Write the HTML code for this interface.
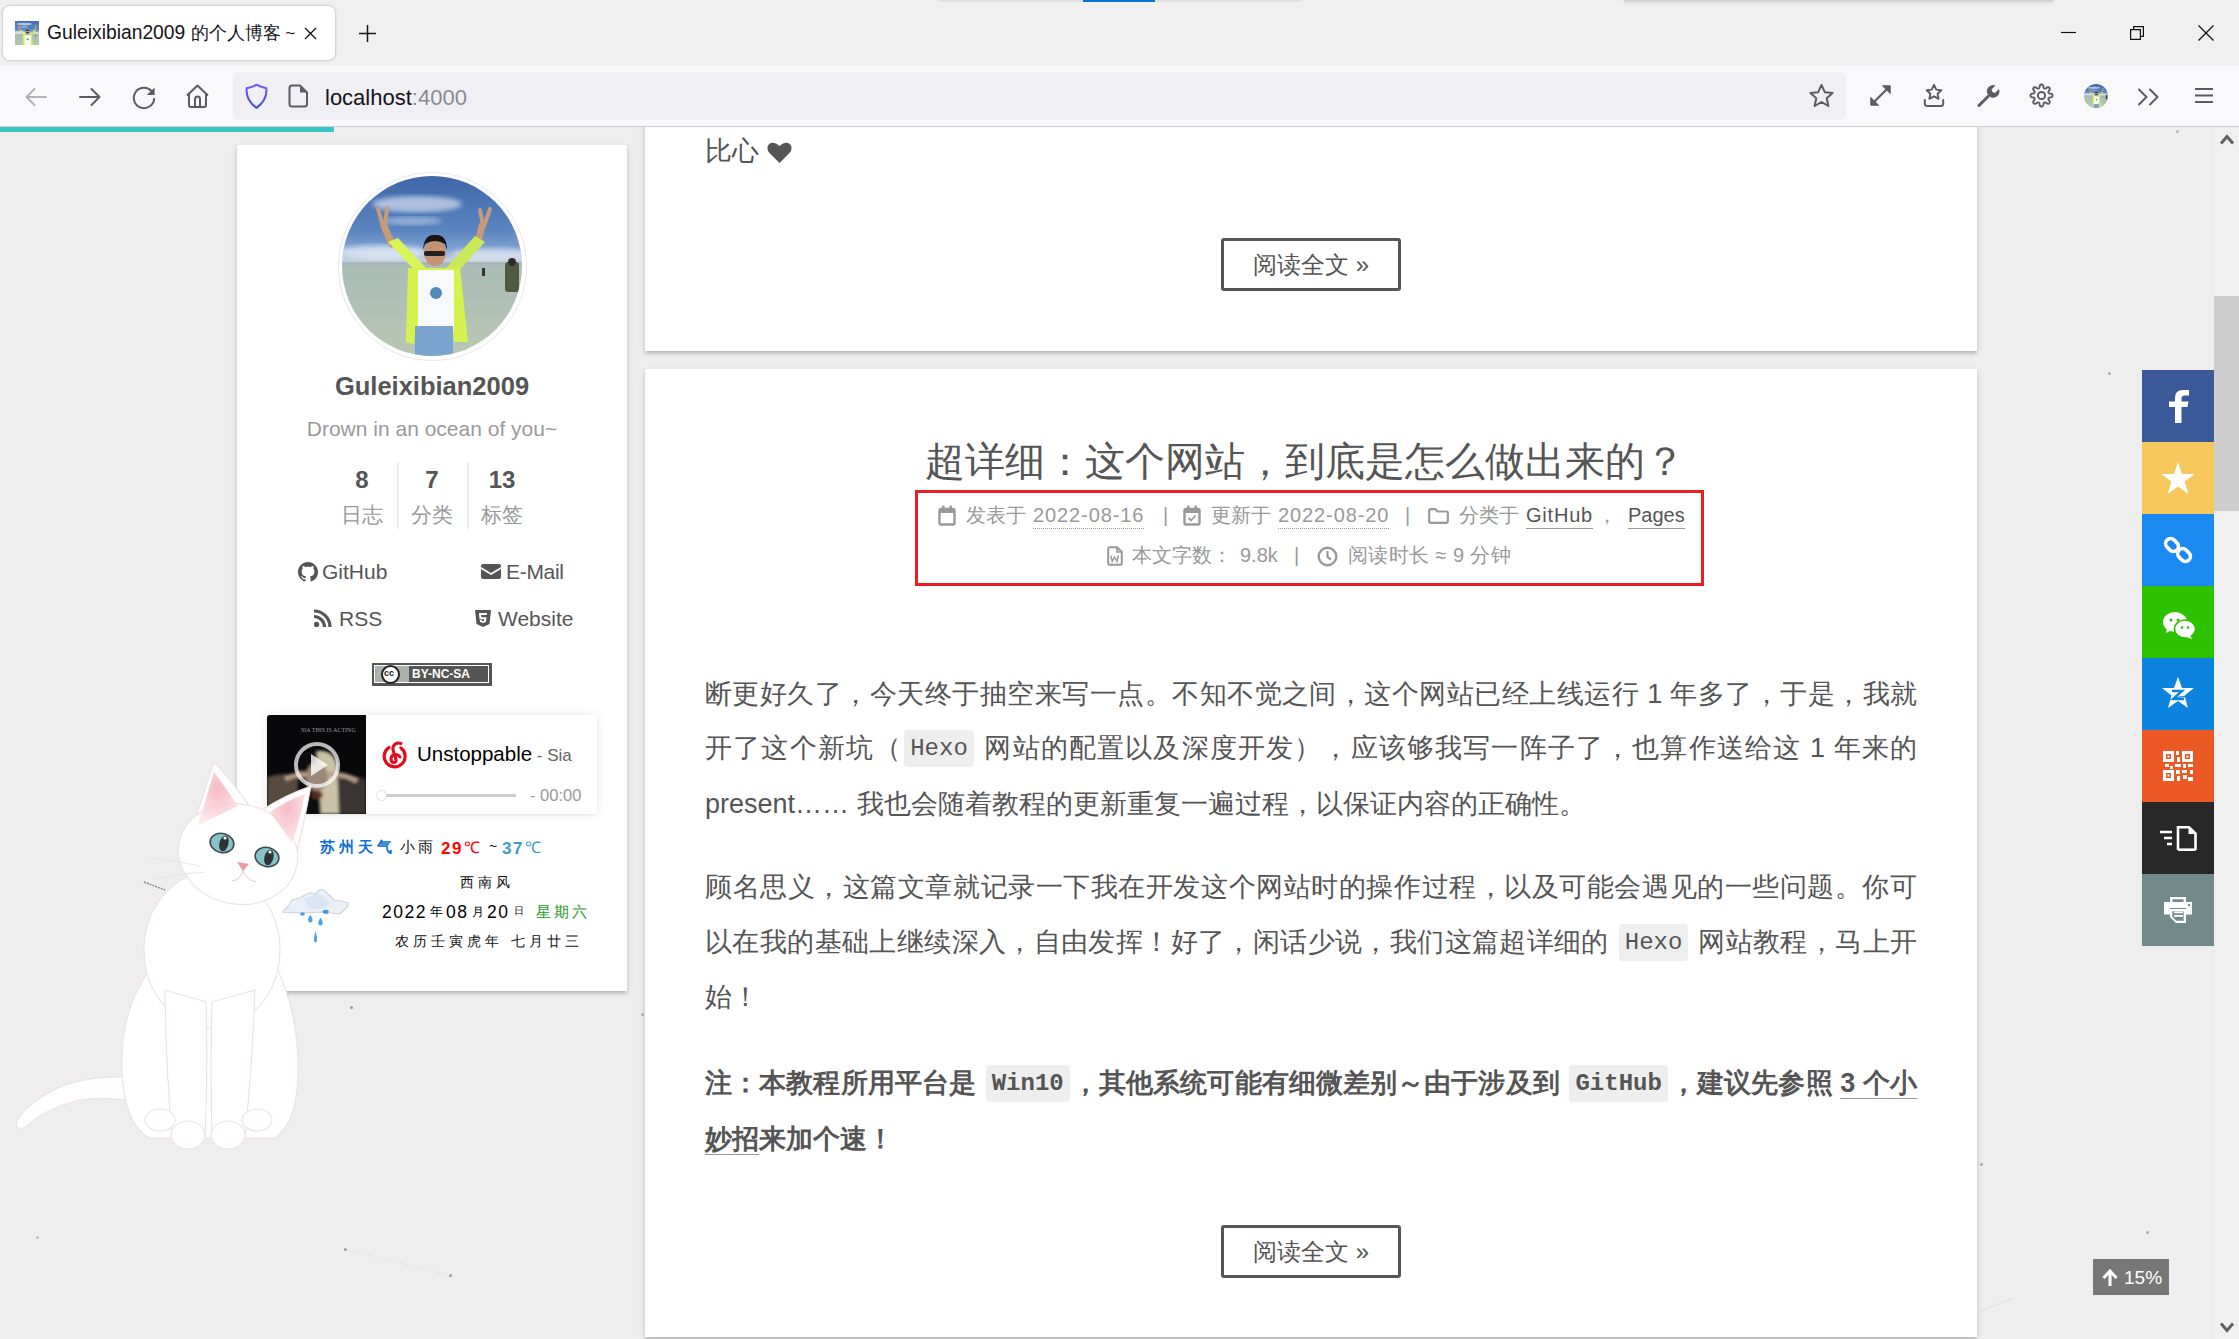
<!DOCTYPE html>
<html><head><meta charset="utf-8">
<style>
*{box-sizing:border-box;margin:0;padding:0}
html,body{width:2239px;height:1339px;overflow:hidden;background:#eee;font-family:"Liberation Sans",sans-serif;}
.abs{position:absolute}
svg{position:absolute;overflow:visible}
#tabstrip{position:absolute;left:0;top:0;width:2239px;height:66px;background:#f0f0f0}
#tab{position:absolute;left:3px;top:6px;width:332px;height:54px;background:#fff;border-radius:7px;box-shadow:0 0 3px rgba(0,0,0,.3)}
#toolbar{position:absolute;left:0;top:66px;width:2239px;height:61px;background:#f9f9fb;border-bottom:1px solid #d0d0d7}
#urlbar{position:absolute;left:233px;top:72px;width:1613px;height:48px;background:#f0f0f4;border-radius:6px}
#viewport{position:absolute;left:0;top:127px;width:2239px;height:1212px;overflow:hidden;background:#eee}
#page{position:absolute;left:0;top:-127px;width:2239px;height:1339px}
#progress{position:absolute;left:0;top:127px;width:334px;height:5px;background:#37c6c0}
#scrolltrack{position:absolute;left:2214px;top:127px;width:25px;height:1212px;background:#f0f0f0}
#thumb{position:absolute;left:2214px;top:296px;width:25px;height:215px;background:#cdcdcd}
.card{position:absolute;background:#fff;box-shadow:0 3px 3px 0 rgba(0,0,0,.12),0 4px 1.5px -3px rgba(0,0,0,.06),0 1.5px 7px 0 rgba(0,0,0,.12)}
#sidebar{left:237px;top:145px;width:390px;height:846px}
#post1{left:645px;top:100px;width:1332px;height:251px}
#post2{left:645px;top:369px;width:1332px;height:968px}
.share{position:absolute;left:2142px;width:72px;height:72px}
.t{position:absolute;white-space:nowrap;line-height:1}

.btn{position:absolute;left:1221px;width:180px;height:53px;border:3px solid #555;border-radius:3px;font-size:24px;color:#555;text-align:center;line-height:47px;white-space:nowrap}
.meta .t{font-size:20px;color:#999;line-height:21px}
.meta .dot{border-bottom:1.5px dotted #999;padding-bottom:2px;letter-spacing:0.9px}
.meta .ul{color:#555;border-bottom:1.5px solid #999;padding-bottom:2px;letter-spacing:0.8px}
.p{position:absolute;left:705px;width:1212px;font-size:27px;line-height:54.6px;height:54.6px;color:#555;white-space:nowrap;overflow:visible}
.p.j{text-align:justify;text-align-last:justify;white-space:normal}
.p.b{font-weight:bold}
.p code{font-family:"Liberation Mono",monospace;font-size:24px;background:#eee;border-radius:4px;padding:5px 6px;margin:0 2px;position:relative;top:-2px}
.lk{border-bottom:1.5px solid #999}
</style></head><body>
<svg width="0" height="0" style="position:absolute"><clipPath id="avclip"><circle cx="90" cy="90" r="90"/></clipPath><symbol id="avraw" viewBox="0 0 180 180">
  <defs>
   <clipPath id="avc"><circle cx="90" cy="90" r="90"/></clipPath>
   <linearGradient id="sky" x1="0" y1="0" x2="0" y2="1"><stop offset="0" stop-color="#3e66a9"/><stop offset="0.3" stop-color="#5a84c0"/><stop offset="0.4" stop-color="#7ea0d0"/><stop offset="0.47" stop-color="#c5d3e3"/><stop offset="0.485" stop-color="#a7b2b8"/><stop offset="0.5" stop-color="#a9bdb6"/><stop offset="1" stop-color="#b9c6b4"/></linearGradient>
   <filter id="bl"><feGaussianBlur stdDeviation="2.5"/></filter>
  </defs>
  <g>
   <rect width="180" height="180" fill="url(#sky)"/>
   <ellipse cx="75" cy="28" rx="45" ry="8" fill="#fff" opacity=".55" filter="url(#bl)"/>
   <ellipse cx="70" cy="45" rx="30" ry="4" fill="#fff" opacity=".4" filter="url(#bl)"/>
   <ellipse cx="40" cy="76" rx="45" ry="7" fill="#fff" opacity=".6" filter="url(#bl)"/>
   <ellipse cx="150" cy="78" rx="40" ry="6" fill="#fff" opacity=".5" filter="url(#bl)"/>
   <path d="M36 33 L41 50 M45 32 L43 50" stroke="#c89a7a" stroke-width="4" stroke-linecap="round"/>
   <path d="M148 33 L142 50 M138 34 L141 50" stroke="#c89a7a" stroke-width="4" stroke-linecap="round"/>
   <path d="M42 50 L50 68" stroke="#c89a7a" stroke-width="7" stroke-linecap="round"/>
   <path d="M140 50 L136 66" stroke="#c89a7a" stroke-width="7" stroke-linecap="round"/>
   <path d="M46 66 L56 62 L84 92 L78 100 Z" fill="#d9f35a"/>
   <path d="M133 60 L143 66 L112 100 L104 92 Z" fill="#c9e85a"/>
   <path d="M66 92 L118 92 L126 166 L112 166 L110 150 L74 150 L72 168 L64 166 Z" fill="#d6f24e"/>
   <rect x="76" y="94" width="36" height="60" fill="#f8f9fa"/>
   <circle cx="94" cy="117" r="6" fill="#4f8ab8"/>
   <rect x="73" y="150" width="38" height="30" fill="#7aa3d0"/>
   <ellipse cx="93" cy="77" rx="11" ry="13" fill="#c69274"/>
   <path d="M81 74 Q82 58 93 59 Q105 58 105 74 L103 68 Q93 62 83 68 Z" fill="#161616"/>
   <rect x="82" y="75" width="21" height="5" rx="2" fill="#222"/>
   <rect x="163" y="86" width="14" height="30" rx="3" fill="#4f5a3c"/>
   <circle cx="170" cy="86" r="4" fill="#2a2a2a"/>
   <rect x="140" y="92" width="3" height="8" fill="#333"/>
  </g>
</symbol></svg>
<!-- ===== BROWSER CHROME ===== -->
<div id="tabstrip"></div>
<div class="abs" style="left:939px;top:0;width:362px;height:2px;background:#e0e0e0"></div>
<div class="abs" style="left:1083px;top:0;width:72px;height:2px;background:#0a6fd8"></div>
<div class="abs" style="left:1624px;top:0;width:429px;height:2px;background:#d3d3d3;box-shadow:0 1px 4px rgba(0,0,0,.12)"></div>
<div id="tab"></div>
<!-- favicon -->
<svg style="left:15px;top:21px;overflow:hidden" width="24" height="24" viewBox="20 10 140 140"><use href="#avraw" width="180" height="180"/></svg>
<div class="t" style="left:47px;top:23px;font-size:19.3px;color:#15141a">Guleixibian2009 <span style="font-size:18.3px">的个人博客</span><span style="font-size:17px"> ~</span></div>
<svg style="left:304px;top:27px" width="13" height="13"><path d="M1 1 L12 12 M12 1 L1 12" stroke="#15141a" stroke-width="1.4"/></svg>
<svg style="left:358px;top:24px" width="19" height="19"><path d="M9.5 1 V18 M1 9.5 H18" stroke="#15141a" stroke-width="1.5"/></svg>
<!-- window controls -->
<svg style="left:2061px;top:31px" width="16" height="3"><path d="M0 1.5 H15" stroke="#111" stroke-width="1.2"/></svg>
<svg style="left:2130px;top:25px" width="16" height="15"><path d="M0.6 4.6 H10.4 V14.4 H0.6 Z M3.6 4.6 V1.6 H13.4 V11.4 H10.4" stroke="#111" stroke-width="1.2" fill="none"/></svg>
<svg style="left:2198px;top:25px" width="16" height="16"><path d="M0.5 0.5 L15.5 15.5 M15.5 0.5 L0.5 15.5" stroke="#111" stroke-width="1.3"/></svg>

<div id="toolbar"></div>
<!-- back / fwd / reload / home -->
<svg style="left:24px;top:87px" width="24" height="20"><path d="M22 10 H3 M10.5 2 L2.5 10 L10.5 18" stroke="#b2b2b8" stroke-width="2" fill="none" stroke-linecap="round" stroke-linejoin="round"/></svg>
<svg style="left:78px;top:87px" width="24" height="20"><path d="M2 10 H21 M13.5 2 L21.5 10 L13.5 18" stroke="#5b5b66" stroke-width="2" fill="none" stroke-linecap="round" stroke-linejoin="round"/></svg>
<svg style="left:132px;top:86px" width="24" height="24"><path d="M22.2 11.9 A10.2 10.2 0 1 1 19.6 5.1" stroke="#5b5b66" stroke-width="2" fill="none"/><path d="M14.8 9 H22.6 V1.4 Z" fill="#5b5b66"/></svg>
<svg style="left:185px;top:84px" width="25" height="25"><path d="M2 11.5 L12.5 1.5 L23 11.5 M4 9.5 V21 Q4 23 6 23 H19 Q21 23 21 21 V9.5 M10 23 V15.5 Q10 12.5 12.5 12.5 Q15 12.5 15 15.5 V23" stroke="#5b5b66" stroke-width="2" fill="none" stroke-linejoin="round"/></svg>

<div id="urlbar"></div>
<svg style="left:244px;top:83px" width="25" height="27"><defs><linearGradient id="sg" x1="0" y1="0" x2="0" y2="1"><stop offset="0" stop-color="#7a5cf5"/><stop offset="1" stop-color="#3a4fd8"/></linearGradient></defs><path d="M12.5 1.8 Q17 4 22.3 5.2 Q23.5 17 12.5 24.8 Q1.5 17 2.7 5.2 Q8 4 12.5 1.8 Z" stroke="url(#sg)" stroke-width="2.1" fill="none" stroke-linejoin="round"/></svg>
<svg style="left:288px;top:84px" width="21" height="24"><path d="M3 1.5 H12 L19 8.5 V20 Q19 22.5 16.5 22.5 H4 Q1.5 22.5 1.5 20 V4 Q1.5 1.5 4 1.5 Z" stroke="#5b5b66" stroke-width="2" fill="none"/><path d="M12 1.5 V8.5 H19 Z" fill="#5b5b66"/></svg>
<div class="t" style="left:325px;top:87px;font-size:22px;color:#15141a">localhost<span style="color:#8a8a92">:4000</span></div>
<svg style="left:1808px;top:83px" width="27" height="26"><path d="M13.5 2 L16.8 9.2 L24.6 10 L18.7 15.2 L20.4 23 L13.5 19 L6.6 23 L8.3 15.2 L2.4 10 L10.2 9.2 Z" stroke="#5b5b66" stroke-width="2" fill="none" stroke-linejoin="round"/></svg>
<!-- right toolbar icons -->
<svg style="left:1869px;top:84px" width="23" height="23"><path d="M4.5 18.5 L18.5 4.5" stroke="#5b5b66" stroke-width="2.2"/><path d="M13.5 1.8 H21.2 V9.5 Z M1.8 13.5 V21.2 H9.5 Z" fill="#5b5b66" stroke="#5b5b66" stroke-width="1" stroke-linejoin="round"/></svg>
<svg style="left:1922px;top:83px" width="24" height="25"><path d="M12 1.8 L14.3 6.6 L19.3 7.2 L15.6 10.7 L16.6 15.8 L12 13.3 L7.4 15.8 L8.4 10.7 L4.7 7.2 L9.7 6.6 Z" stroke="#5b5b66" stroke-width="1.9" fill="none" stroke-linejoin="round"/><path d="M2.8 17 V20.5 Q2.8 23 5.3 23 H18.7 Q21.2 23 21.2 20.5 V17" stroke="#5b5b66" stroke-width="2" fill="none" stroke-linecap="round"/></svg>
<svg style="left:1976px;top:84px" width="24" height="24"><path d="M3 21.5 L13 11.5" stroke="#5b5b66" stroke-width="3" stroke-linecap="round"/><path d="M11 9 A6.5 6.5 0 0 1 19.5 1.5 L15.5 5.5 L16.5 8 L19 9 L23 5 A6.5 6.5 0 0 1 15 13.5 Z" fill="#5b5b66"/></svg>
<svg style="left:2029px;top:83px" width="25" height="25"><path d="M12.50 1.50 L12.79 1.51 L13.07 1.56 L13.35 1.65 L13.62 1.80 L13.87 2.07 L14.09 2.48 L14.25 3.06 L14.37 3.70 L14.47 4.28 L14.59 4.70 L14.73 4.98 L14.88 5.16 L15.05 5.29 L15.23 5.40 L15.41 5.48 L15.60 5.55 L15.79 5.60 L16.00 5.63 L16.24 5.61 L16.54 5.51 L16.92 5.29 L17.40 4.96 L17.94 4.58 L18.46 4.29 L18.91 4.15 L19.27 4.14 L19.57 4.22 L19.83 4.36 L20.06 4.53 L20.28 4.72 L20.47 4.94 L20.64 5.17 L20.78 5.43 L20.86 5.73 L20.85 6.09 L20.71 6.54 L20.42 7.06 L20.04 7.60 L19.71 8.08 L19.49 8.46 L19.39 8.76 L19.37 9.00 L19.40 9.21 L19.45 9.40 L19.52 9.59 L19.60 9.77 L19.71 9.95 L19.84 10.12 L20.02 10.27 L20.30 10.41 L20.72 10.53 L21.30 10.63 L21.94 10.75 L22.52 10.91 L22.93 11.13 L23.20 11.38 L23.35 11.65 L23.44 11.93 L23.49 12.21 L23.50 12.50 L23.49 12.79 L23.44 13.07 L23.35 13.35 L23.20 13.62 L22.93 13.87 L22.52 14.09 L21.94 14.25 L21.30 14.37 L20.72 14.47 L20.30 14.59 L20.02 14.73 L19.84 14.88 L19.71 15.05 L19.60 15.23 L19.52 15.41 L19.45 15.60 L19.40 15.79 L19.37 16.00 L19.39 16.24 L19.49 16.54 L19.71 16.92 L20.04 17.40 L20.42 17.94 L20.71 18.46 L20.85 18.91 L20.86 19.27 L20.78 19.57 L20.64 19.83 L20.47 20.06 L20.28 20.28 L20.06 20.47 L19.83 20.64 L19.57 20.78 L19.27 20.86 L18.91 20.85 L18.46 20.71 L17.94 20.42 L17.40 20.04 L16.92 19.71 L16.54 19.49 L16.24 19.39 L16.00 19.37 L15.79 19.40 L15.60 19.45 L15.41 19.52 L15.23 19.60 L15.05 19.71 L14.88 19.84 L14.73 20.02 L14.59 20.30 L14.47 20.72 L14.37 21.30 L14.25 21.94 L14.09 22.52 L13.87 22.93 L13.62 23.20 L13.35 23.35 L13.07 23.44 L12.79 23.49 L12.50 23.50 L12.21 23.49 L11.93 23.44 L11.65 23.35 L11.38 23.20 L11.13 22.93 L10.91 22.52 L10.75 21.94 L10.63 21.30 L10.53 20.72 L10.41 20.30 L10.27 20.02 L10.12 19.84 L9.95 19.71 L9.77 19.60 L9.59 19.52 L9.40 19.45 L9.21 19.40 L9.00 19.37 L8.76 19.39 L8.46 19.49 L8.08 19.71 L7.60 20.04 L7.06 20.42 L6.54 20.71 L6.09 20.85 L5.73 20.86 L5.43 20.78 L5.17 20.64 L4.94 20.47 L4.72 20.28 L4.53 20.06 L4.36 19.83 L4.22 19.57 L4.14 19.27 L4.15 18.91 L4.29 18.46 L4.58 17.94 L4.96 17.40 L5.29 16.92 L5.51 16.54 L5.61 16.24 L5.63 16.00 L5.60 15.79 L5.55 15.60 L5.48 15.41 L5.40 15.23 L5.29 15.05 L5.16 14.88 L4.98 14.73 L4.70 14.59 L4.28 14.47 L3.70 14.37 L3.06 14.25 L2.48 14.09 L2.07 13.87 L1.80 13.62 L1.65 13.35 L1.56 13.07 L1.51 12.79 L1.50 12.50 L1.51 12.21 L1.56 11.93 L1.65 11.65 L1.80 11.38 L2.07 11.13 L2.48 10.91 L3.06 10.75 L3.70 10.63 L4.28 10.53 L4.70 10.41 L4.98 10.27 L5.16 10.12 L5.29 9.95 L5.40 9.77 L5.48 9.59 L5.55 9.40 L5.60 9.21 L5.63 9.00 L5.61 8.76 L5.51 8.46 L5.29 8.08 L4.96 7.60 L4.58 7.06 L4.29 6.54 L4.15 6.09 L4.14 5.73 L4.22 5.43 L4.36 5.17 L4.53 4.94 L4.72 4.72 L4.94 4.53 L5.17 4.36 L5.43 4.22 L5.73 4.14 L6.09 4.15 L6.54 4.29 L7.06 4.58 L7.60 4.96 L8.08 5.29 L8.46 5.51 L8.76 5.61 L9.00 5.63 L9.21 5.60 L9.40 5.55 L9.59 5.48 L9.77 5.40 L9.95 5.29 L10.12 5.16 L10.27 4.98 L10.41 4.70 L10.53 4.28 L10.63 3.70 L10.75 3.06 L10.91 2.48 L11.13 2.07 L11.38 1.80 L11.65 1.65 L11.93 1.56 L12.21 1.51 Z" stroke="#5b5b66" stroke-width="1.9" fill="none" stroke-linejoin="round"/><circle cx="12.5" cy="12.5" r="3.6" stroke="#5b5b66" stroke-width="2" fill="none"/></svg>
<svg style="left:2084px;top:84px;overflow:hidden" width="24" height="24" viewBox="0 0 180 180"><g clip-path="url(#avclip)"><use href="#avraw" width="180" height="180"/></g></svg>
<svg style="left:2137px;top:88px" width="25" height="18"><path d="M2 1.5 L9.5 9 L2 16.5 M13 1.5 L20.5 9 L13 16.5" stroke="#5b5b66" stroke-width="2" fill="none" stroke-linejoin="round" stroke-linecap="round"/></svg>
<svg style="left:2194px;top:87px" width="20" height="17"><path d="M1 2 H19 M1 8.5 H19 M1 15 H19" stroke="#5b5b66" stroke-width="2"/></svg>

<!-- ===== PAGE ===== -->
<div id="viewport"><div id="page">
<div id="scrolltrack"></div>
<div id="thumb"></div>
<div class="card" id="sidebar"></div>

<!-- sidebar content -->
<div class="abs" style="left:338px;top:172px;width:189px;height:189px;border-radius:50%;border:1.5px solid #e8e8e8;padding:3px;background:#fff">
 <svg style="left:3px;top:3px;overflow:hidden" width="180" height="180" viewBox="0 0 180 180"><g clip-path="url(#avclip)"><use href="#avraw" width="180" height="180"/></g> </svg>
</div>
<div class="t" style="left:237px;width:390px;text-align:center;top:374px;font-size:25.5px;font-weight:bold;color:#555">Guleixibian2009</div>
<div class="t" style="left:237px;width:390px;text-align:center;top:418px;font-size:21px;color:#999">Drown in an ocean of you~</div>
<div class="t" style="left:332px;width:60px;text-align:center;top:468px;font-size:24px;font-weight:bold;color:#555">8</div>
<div class="t" style="left:402px;width:60px;text-align:center;top:468px;font-size:24px;font-weight:bold;color:#555">7</div>
<div class="t" style="left:472px;width:60px;text-align:center;top:468px;font-size:24px;font-weight:bold;color:#555">13</div>
<div class="t" style="left:332px;width:60px;text-align:center;top:504px;font-size:21px;color:#999">日志</div>
<div class="t" style="left:402px;width:60px;text-align:center;top:504px;font-size:21px;color:#999">分类</div>
<div class="t" style="left:472px;width:60px;text-align:center;top:504px;font-size:21px;color:#999">标签</div>
<div class="abs" style="left:397px;top:462px;width:1.5px;height:67px;background:#eee"></div>
<div class="abs" style="left:467px;top:462px;width:1.5px;height:67px;background:#eee"></div>
<!-- links -->
<svg style="left:298px;top:562px" width="20" height="20" viewBox="0 0 16 16"><path fill="#555" d="M8 0C3.58 0 0 3.58 0 8c0 3.54 2.29 6.53 5.47 7.59.4.07.55-.17.55-.38 0-.19-.01-.82-.01-1.49-2.01.37-2.53-.49-2.69-.94-.09-.23-.48-.94-.82-1.13-.28-.15-.68-.52-.01-.53.63-.01 1.08.58 1.23.82.72 1.21 1.87.87 2.33.66.07-.52.28-.87.51-1.07-1.78-.2-3.64-.89-3.640-3.95 0-.87.31-1.59.82-2.15-.08-.2-.36-1.02.08-2.12 0 0 .67-.21 2.2.82.64-.18 1.32-.27 2-.27.68 0 1.36.09 2 .27 1.53-1.04 2.2-.82 2.2-.82.44 1.1.16 1.92.08 2.12.51.56.82 1.270.82 2.15 0 3.07-1.87 3.75-3.65 3.95.29.25.54.73.54 1.48 0 1.07-.01 1.93-.01 2.2 0 .21.15.46.55.38A8.013 8.013 0 0016 8c0-4.42-3.58-8-8-8z"/></svg>
<div class="t" style="left:322px;top:561px;font-size:21px;color:#555">GitHub</div>
<svg style="left:481px;top:564px" width="20" height="15"><path d="M2 0 H18 Q20 0 20 2 V3 L10 9 L0 3 V2 Q0 0 2 0 Z M0 5 L10 11 L20 5 V13 Q20 15 18 15 H2 Q0 15 0 13 Z" fill="#555"/></svg>
<div class="t" style="left:506px;top:561px;font-size:21px;color:#555;letter-spacing:-0.3px">E-Mail</div>
<svg style="left:314px;top:610px" width="18" height="17"><circle cx="2.6" cy="14.4" r="2.6" fill="#555"/><path d="M0 6.5 A10.5 10.5 0 0 1 10.5 17 M0 1 A16 16 0 0 1 16 17" stroke="#555" stroke-width="3.2" fill="none"/></svg>
<div class="t" style="left:339px;top:608px;font-size:21px;color:#555">RSS</div>
<svg style="left:475px;top:610px" width="16" height="17"><path d="M0 0 H16 L14.5 14 L8 17 L1.5 14 Z" fill="#555"/><path d="M4 3 H12 L11.7 5 H6.2 L6.4 7.3 H11.5 L11 12 L8 13 L5 12 L4.8 10 H6.8 L7 11 L8 11.3 L9 11 L9.2 9.2 H4.5 Z" fill="#fff"/></svg>
<div class="t" style="left:498px;top:608px;font-size:21px;color:#555">Website</div>
<!-- cc badge -->
<div class="abs" style="left:372px;top:663px;width:120px;height:23px;background:#555;border:1.5px solid #555">
 <div class="abs" style="left:1px;top:1px;width:115px;height:18px;background:#aab2ab;border:0"></div>
 <div class="abs" style="left:36px;top:1px;width:80px;height:18px;background:#555"></div>
 <div class="abs" style="left:1px;top:1px;width:115px;height:18px;border:1px solid #fff"></div>
 <div class="abs" style="left:8px;top:1px;width:19px;height:19px;border-radius:50%;background:#fff;border:2px solid #222"></div>
 <div class="t" style="left:11px;top:5px;font-size:9px;font-weight:bold;color:#222">cc</div>
 <div class="t" style="left:39px;top:4px;font-size:12px;font-weight:bold;color:#fff">BY-NC-SA</div>
</div>
<!-- player -->
<div class="abs" style="left:267px;top:715px;width:330px;height:99px;background:#fff;border-radius:3px;box-shadow:0 0 12px rgba(0,0,0,.09),0 1px 2px rgba(0,0,0,.05)">
 <div class="abs" style="left:0;top:0;width:99px;height:99px;background:#08080a;border-radius:3px 0 0 3px;overflow:hidden">
  <svg style="left:0;top:0" width="99" height="99" viewBox="0 0 99 99">
   <defs><filter id="cb"><feGaussianBlur stdDeviation="1.5"/></filter></defs>
   <g filter="url(#cb)">
   <path d="M0 62 Q20 56 35 62 L40 99 H0 Z" fill="#6a5a4c" opacity=".8"/>
   <path d="M60 62 Q80 58 99 64 V99 H60 Z" fill="#3a3632"/>
   <path d="M30 44 Q46 30 62 40 L70 99 H30 Z" fill="#101010"/>
   <path d="M50 36 Q66 34 70 50 L72 99 H54 Z" fill="#c9c2a4"/>
   <ellipse cx="50" cy="62" rx="11" ry="14" fill="#9c8878"/>
   <path d="M18 64 Q32 58 40 60 M62 60 Q76 58 90 66" stroke="#b89c84" stroke-width="5" fill="none"/>
   <ellipse cx="50" cy="80" rx="6" ry="4" fill="#5a2a24"/>
   </g>
   <text x="34" y="17" font-size="6" fill="#9a9a9a" font-family="Liberation Serif">SIA THIS IS ACTING</text>
  </svg>
 </div>
 <div class="abs" style="left:27px;top:27px;width:46px;height:46px;border-radius:50%;border:4px solid rgba(255,255,255,.72)"></div>
 <svg style="left:42px;top:38px" width="20" height="24"><path d="M2 1 L19 12 L2 23 Z" fill="rgba(255,255,255,.8)"/></svg>
 <svg style="left:114px;top:26px" width="27" height="28" viewBox="0 0 27 28"><path d="M8 6.5 A10.5 10.5 0 1 0 20 7" stroke="#e60a1e" stroke-width="3.2" fill="none" stroke-linecap="round"/><path d="M20 2.5 Q15 1 12.5 5 Q11 8 13 12 L15 18.5 Q15.8 21.5 13 21.5 Q10 21.5 10 18 Q10 14.5 13.5 13.5 Q17 13 19 16" stroke="#e60a1e" stroke-width="3" fill="none" stroke-linecap="round"/></svg>
 <div class="t" style="left:150px;top:29px;font-size:20.5px;color:#000">Unstoppable<span style="font-size:17px;color:#666"> - Sia</span></div>
 <div class="abs" style="left:112px;top:79px;width:137px;height:3px;background:#cdcdcd"></div>
 <div class="abs" style="left:109px;top:75px;width:11px;height:11px;border-radius:50%;background:#fff;border:1.5px solid #ddd"></div>
 <div class="t" style="left:263px;top:72px;font-size:16.5px;color:#999">- 00:00</div>
</div>
<!-- weather -->
<div class="t" style="left:320px;top:839px;font-size:15px;font-weight:bold;color:#0b6fd1;letter-spacing:4px">苏州天气</div>
<div class="t" style="left:400px;top:839px;font-size:15px;color:#111;letter-spacing:3px">小雨</div>
<div class="t" style="left:441px;top:840px;font-size:17px;font-weight:bold;color:#f00;letter-spacing:1.5px">29</div>
<div class="t" style="left:464px;top:840px;font-size:16px;color:#f00">℃</div>
<div class="t" style="left:489px;top:839px;font-size:14px;color:#111">~</div>
<div class="t" style="left:502px;top:840px;font-size:17px;font-weight:bold;color:#3d9ccc;letter-spacing:1.5px">37</div>
<div class="t" style="left:525px;top:840px;font-size:16px;color:#3d9ccc">℃</div>
<div class="t" style="left:460px;top:875px;font-size:14px;color:#111;letter-spacing:4px">西南风</div>
<div class="t" style="left:382px;top:904px;font-size:17.5px;color:#000;letter-spacing:1.5px">2022</div>
<div class="t" style="left:430px;top:906px;font-size:12.5px;color:#000">年</div>
<div class="t" style="left:446px;top:904px;font-size:17.5px;color:#000;letter-spacing:1.5px">08</div>
<div class="t" style="left:472px;top:906px;font-size:12px;color:#000">月</div>
<div class="t" style="left:487px;top:904px;font-size:17.5px;color:#000;letter-spacing:1.5px">20</div>
<div class="t" style="left:514px;top:906px;font-size:10px;color:#000">日</div>
<div class="t" style="left:536px;top:904px;font-size:15px;color:#1a9a1a;letter-spacing:3px">星期六</div>
<div class="t" style="left:395px;top:935px;font-size:13.5px;color:#111;letter-spacing:4px">农历壬寅虎年 七月廿三</div>
<svg style="left:282px;top:887px" width="68" height="58"><defs><linearGradient id="cg" x1="0" y1="0" x2="1" y2="1"><stop offset="0" stop-color="#f4f7fb"/><stop offset="0.5" stop-color="#e6eef8"/><stop offset="1" stop-color="#eef2f6"/></linearGradient></defs><path d="M1 24 L6 20 L10 13 L18 11 L22 8.5 L28 6 L33 7 L38 2.5 L42 3 L52 13 L60 14 L66 16 L66 19 L58 27 L40 25 L20 26 L1 25.5 Z" fill="url(#cg)" stroke="#cfd2d6" stroke-width="1.1" stroke-linejoin="round"/><path d="M22 12 L36 6 L48 16 L40 22 L28 22 Z" fill="#d4e2f5" opacity=".8"/><ellipse cx="20.5" cy="27" rx="2.4" ry="1.8" fill="#4a9fe0"/><path d="M28.3 27.5 Q31 32 30.5 34 Q28.3 37 26.1 34 Q25.6 32 28.3 27.5 Z" fill="#4aa6e6"/><path d="M38.5 30.5 Q41.2 35 40.7 37 Q38.5 40 36.3 37 Q35.8 35 38.5 30.5 Z" fill="#4aa6e6"/><ellipse cx="43.7" cy="24.8" rx="3" ry="2" fill="#3f95e0"/><path d="M33.5 44 Q35.5 50 35 54 Q33.5 57 32 54 Q31.5 50 33.5 44 Z" fill="#4aa6ee"/></svg>

<div class="card" id="post1"></div>

<!-- cat -->
<svg style="left:0;top:740px" width="360" height="420" viewBox="0 0 360 420">
 <defs>
  <radialGradient id="earg" cx="0.5" cy="0.3" r="0.7"><stop offset="0" stop-color="#f4aab6"/><stop offset="1" stop-color="#fbe3e7"/></radialGradient>
  <radialGradient id="eyeg" cx="0.5" cy="0.5" r="0.5"><stop offset="0" stop-color="#1e2a2c"/><stop offset="0.45" stop-color="#2f4a50"/><stop offset="0.55" stop-color="#4f9aa6"/><stop offset="1" stop-color="#7cc0c8"/></radialGradient>
  <filter id="soft"><feGaussianBlur stdDeviation="1.2"/></filter>
 </defs>
 <g stroke="#f0e2e4" stroke-width="1.2" fill="#fff">
  <!-- tail -->
  <path d="M135 338 Q100 334 65 345 Q30 360 17 380 Q14 392 26 387 Q45 368 80 360 Q115 355 150 366 Z"/>
  <!-- haunches / lower body -->
  <path d="M150 230 Q120 270 122 330 Q124 385 150 398 L275 398 Q300 380 298 320 Q296 260 270 215 Z"/>
  <!-- chest -->
  <ellipse cx="212" cy="210" rx="68" ry="78"/>
  <!-- front legs -->
  <path d="M165 250 Q166 330 172 395 L205 397 Q208 330 206 262 Z"/>
  <path d="M212 262 Q210 330 212 397 L245 395 Q252 330 255 250 Z"/>
  <!-- paws -->
  <ellipse cx="160" cy="380" rx="15" ry="11"/>
  <ellipse cx="257" cy="380" rx="15" ry="11"/>
  <ellipse cx="188" cy="395" rx="17" ry="14"/>
  <ellipse cx="228" cy="395" rx="17" ry="14"/>
  <!-- ears -->
  <path d="M190 95 L214 22 Q232 40 252 70 Z"/>
  <path d="M262 70 Q285 55 311 46 Q305 80 296 115 Z"/>
  <!-- head -->
  <ellipse cx="238" cy="114" rx="60" ry="50" transform="rotate(12 238 114)"/>
 </g>
 <path d="M198 85 L214 32 Q226 48 238 66 Z" fill="url(#earg)" opacity=".8"/>
 <path d="M270 72 Q288 60 305 54 Q300 80 292 103 Z" fill="url(#earg)" opacity=".8"/>
 <g transform="rotate(14 222 103)"><ellipse cx="222" cy="103" rx="12" ry="9.5" fill="#86c4cc" stroke="#3e4a4c" stroke-width="1.6"/><ellipse cx="224" cy="103" rx="4.5" ry="8" fill="#2e3436"/></g>
 <g transform="rotate(14 267 117)"><ellipse cx="267" cy="117" rx="12" ry="9.5" fill="#86c4cc" stroke="#3e4a4c" stroke-width="1.6"/><ellipse cx="269" cy="117" rx="4.5" ry="8" fill="#2e3436"/></g>
 <circle cx="225" cy="98" r="1.6" fill="#fff"/><circle cx="270" cy="112" r="1.6" fill="#fff"/>
 <path d="M237 122 L249 124 L243 131 Z" fill="#e79aa4"/>
 <path d="M243 131 Q240 140 232 141 M243 131 Q247 140 256 142" stroke="#e6c8cc" stroke-width="1" fill="none"/>
 <path d="M144 142 L165 150" stroke="#8a8a8a" stroke-width="1.5" stroke-dasharray="2 1"/>
 <path d="M200 126 Q170 120 150 118 M205 132 Q175 134 155 140" stroke="#eadde0" stroke-width="0.8" fill="none"/>
</svg>

<div class="card" id="post2"></div>

<!-- post1 content -->
<div class="t" style="left:705px;top:138px;font-size:27px;color:#555">比心 <svg style="position:relative;left:0;top:3px;display:inline-block" width="25" height="21" viewBox="0 0 25 21"><path d="M12.5 21 L2.5 11 Q-1.5 6 2 2.2 Q6.5 -1.5 12.5 4 Q18.5 -1.5 23 2.2 Q26.5 6 22.5 11 Z" fill="#555"/></svg></div>
<div class="btn" style="top:238px">阅读全文 »</div>
<!-- post2 content -->
<div class="t" style="left:639px;width:1332px;text-align:center;top:441px;font-size:40px;color:#555">超详细：这个网站，到底是怎么做出来的？</div>
<div class="abs" style="left:915px;top:490px;width:789px;height:96px;border:3px solid #ec1c24"></div>
<div class="meta" style="top:505px">
 <svg style="left:938px;top:505px" width="18" height="21"><rect x="1.5" y="4" width="15" height="15.5" rx="1.5" stroke="#999" stroke-width="2.4" fill="none"/><rect x="1.5" y="4" width="15" height="4" fill="#999"/><rect x="4" y="0.5" width="2.6" height="5" rx="1" fill="#999"/><rect x="11.4" y="0.5" width="2.6" height="5" rx="1" fill="#999"/></svg>
 <div class="t" style="left:966px;top:505px">发表于</div>
 <div class="t dot" style="left:1033px;top:505px">2022-08-16</div>
 <div class="t" style="left:1163px;top:505px">|</div>
 <svg style="left:1183px;top:505px" width="18" height="21"><rect x="1.5" y="4" width="15" height="15.5" rx="1.5" stroke="#999" stroke-width="2.4" fill="none"/><rect x="1.5" y="4" width="15" height="4" fill="#999"/><rect x="4" y="0.5" width="2.6" height="5" rx="1" fill="#999"/><rect x="11.4" y="0.5" width="2.6" height="5" rx="1" fill="#999"/><path d="M5.5 13 L8 15.5 L12.5 10.5" stroke="#999" stroke-width="1.8" fill="none"/></svg>
 <div class="t" style="left:1211px;top:505px">更新于</div>
 <div class="t dot" style="left:1278px;top:505px">2022-08-20</div>
 <div class="t" style="left:1405px;top:505px">|</div>
 <svg style="left:1428px;top:508px" width="21" height="16"><path d="M1.2 2.5 Q1.2 1.2 2.5 1.2 H7.5 L9.5 3.5 H18.5 Q19.8 3.5 19.8 4.8 V13.5 Q19.8 14.8 18.5 14.8 H2.5 Q1.2 14.8 1.2 13.5 Z" stroke="#999" stroke-width="2.2" fill="none" stroke-linejoin="round"/></svg>
 <div class="t" style="left:1459px;top:505px">分类于</div>
 <div class="t ul" style="left:1526px;top:505px">GitHub</div>
 <div class="t" style="left:1597px;top:505px">，</div>
 <div class="t ul" style="left:1628px;top:505px;letter-spacing:0">Pages</div>
</div>
<div class="meta">
 <svg style="left:1107px;top:546px" width="16" height="20"><path d="M1.2 2.5 Q1.2 1.2 2.5 1.2 H10 L14.8 6 V17.5 Q14.8 18.8 13.5 18.8 H2.5 Q1.2 18.8 1.2 17.5 Z" stroke="#999" stroke-width="2" fill="none"/><path d="M10 1.2 V6 H14.8" stroke="#999" stroke-width="1.6" fill="none"/><path d="M3.8 9.5 L5.2 15.5 L7.6 11 L10 15.5 L11.4 9.5" stroke="#999" stroke-width="1.4" fill="none"/></svg>
 <div class="t" style="left:1132px;top:545px">本文字数：</div>
 <div class="t" style="left:1240px;top:545px">9.8k</div>
 <div class="t" style="left:1294px;top:545px">|</div>
 <svg style="left:1317px;top:546px" width="21" height="21"><circle cx="10.5" cy="10.5" r="8.8" stroke="#999" stroke-width="2.4" fill="none"/><path d="M10.5 5 V11 L14 13.5" stroke="#999" stroke-width="2.2" fill="none"/></svg>
 <div class="t" style="left:1348px;top:545px;letter-spacing:0.4px">阅读时长 ≈ 9 分钟</div>
</div>
<!-- paragraphs -->
<div class="p j" style="top:667px">断更好久了，今天终于抽空来写一点。不知不觉之间，这个网站已经上线运行 1 年多了，于是，我就</div>
<div class="p j" style="top:721px">开了这个新坑（<code>Hexo</code> 网站的配置以及深度开发），应该够我写一阵子了，也算作送给这 1 年来的</div>
<div class="p" style="top:777px">present…… 我也会随着教程的更新重复一遍过程，以保证内容的正确性。</div>
<div class="p j" style="top:860px">顾名思义，这篇文章就记录一下我在开发这个网站时的操作过程，以及可能会遇见的一些问题。你可</div>
<div class="p j" style="top:915px">以在我的基础上继续深入，自由发挥！好了，闲话少说，我们这篇超详细的 <code>Hexo</code> 网站教程，马上开</div>
<div class="p" style="top:970px">始！</div>
<div class="p j b" style="top:1056px">注：本教程所用平台是 <code>Win10</code>，其他系统可能有细微差别～由于涉及到 <code>GitHub</code>，建议先参照 <span class="lk">3 个小</span></div>
<div class="p b" style="top:1112px"><span class="lk">妙招</span>来加个速！</div>
<div class="btn" style="top:1225px">阅读全文 »</div>


<div class="share" style="top:370px;background:#3b5998"><svg style="left:27px;top:19px" width="20" height="34" viewBox="0 0 20 34"><path d="M6 34 V18 H0 V12.5 H6 V8.5 Q6 1 14 1 H20 V6.5 H15.5 Q12.5 6.5 12.5 9.5 V12.5 H19.5 L18.5 18 H12.5 V34 Z" fill="#fff"/></svg></div>
<div class="share" style="top:442px;background:#f6c85c"><svg style="left:19px;top:20px" width="34" height="32" viewBox="0 0 34 32"><path d="M17 0 L21 12 H34 L23.5 19.5 L27.5 32 L17 24.5 L6.5 32 L10.5 19.5 L0 12 H13 Z" fill="#fff"/></svg></div>
<div class="share" style="top:514px;background:#1a8af2"><svg style="left:21px;top:21px" width="30" height="30" viewBox="0 0 30 30"><g fill="none" stroke="#fff" stroke-width="3.6"><rect x="2" y="5" width="14" height="10" rx="5" transform="rotate(45 9 10)"/><rect x="14" y="15" width="14" height="10" rx="5" transform="rotate(45 21 20)"/></g></svg></div>
<div class="share" style="top:586px;background:#2dc100"><svg style="left:20px;top:26px" width="34" height="28" viewBox="0 0 34 28"><ellipse cx="13" cy="10" rx="12" ry="10" fill="#fff"/><path d="M5 16 L4 21 L10 18 Z" fill="#fff"/><ellipse cx="23" cy="17" rx="10.5" ry="9" fill="#fff" stroke="#2dc100" stroke-width="1.5"/><path d="M28 23 L30 27 L24 25 Z" fill="#fff"/><circle cx="9" cy="8" r="1.5" fill="#2dc100"/><circle cx="16" cy="8" r="1.5" fill="#2dc100"/><circle cx="20" cy="15.5" r="1.3" fill="#2dc100"/><circle cx="26" cy="15.5" r="1.3" fill="#2dc100"/></svg></div>
<div class="share" style="top:658px;background:#0c84de"><svg style="left:19px;top:19px" width="34" height="32" viewBox="0 0 34 32"><path d="M17 0 L21 11 H33 L23.5 18.5 L27 31 L17 24 L7 31 L10.5 18.5 L1 11 H13 Z" fill="#fff"/><path d="M11 14 H21 L12 22 H23" stroke="#0c84de" stroke-width="2.4" fill="none"/><path d="M14 21 Q22 19 29 20" stroke="#0c84de" stroke-width="1.2" fill="none"/></svg></div>
<div class="share" style="top:730px;background:#eb5a24"><svg style="left:21px;top:21px" width="30" height="30" viewBox="0 0 30 30"><g fill="#fff"><path d="M0 0 H11 V11 H0 Z M3 3 V8 H8 V3 Z"/><rect x="4.5" y="4.5" width="2" height="2"/><path d="M19 0 H30 V11 H19 Z M22 3 V8 H27 V3 Z"/><rect x="23.5" y="4.5" width="2" height="2"/><path d="M0 19 H11 V30 H0 Z M3 22 V27 H8 V22 Z"/><rect x="4.5" y="23.5" width="2" height="2"/><rect x="13" y="0" width="3" height="4"/><rect x="14" y="6" width="3" height="5"/><rect x="12" y="13" width="6" height="3"/><rect x="2" y="13" width="4" height="3"/><rect x="7" y="15" width="3" height="3"/><rect x="20" y="13" width="3" height="4"/><rect x="25" y="13" width="5" height="3"/><rect x="13" y="19" width="4" height="4"/><rect x="19" y="19" width="5" height="3"/><rect x="27" y="19" width="3" height="4"/><rect x="14" y="25" width="3" height="5"/><rect x="20" y="24" width="4" height="4"/><rect x="25" y="26" width="5" height="4"/></g></svg></div>
<div class="share" style="top:802px;background:#282828"><svg style="left:17px;top:24px" width="38" height="25" viewBox="0 0 38 25"><g fill="none" stroke="#fff" stroke-width="2.6"><path d="M1 6 H13 M5 12 H13 M8 18 H13"/><path d="M19 24 V1.3 H30 L36.5 7.5 V24"/><path d="M19 23.7 H36.5"/></g><path d="M29.5 0 L37.5 8 H29.5 Z" fill="#fff"/></svg></div>
<div class="share" style="top:874px;background:#728a8a"><svg style="left:22px;top:23px" width="28" height="26" viewBox="0 0 28 26"><g fill="#fff"><path d="M6 0 H22 V6 H19.5 V2.3 H8.5 V6 H6 Z"/><path d="M0 5 H28 V17.5 H22 V11 H6 V17.5 H0 Z"/><path d="M6 12 H22 V26 H12 L6 20 Z M8.3 14.3 V19.7 L12.3 23.7 H19.7 V14.3 Z"/><rect x="10" y="14.5" width="9" height="1.8"/><rect x="10" y="18" width="9" height="1.8"/></g><circle cx="25" cy="8" r="1.2" fill="#728a8a"/></svg></div>
<div class="abs" style="left:2093px;top:1259px;width:76px;height:36px;background:#777"><svg style="left:9px;top:10px" width="16" height="17" viewBox="0 0 16 17"><path d="M8 17 V3 M1.5 9 L8 2 L14.5 9" stroke="#fff" stroke-width="3" fill="none"/></svg><div class="t" style="left:31px;top:9px;font-size:19px;color:#fff">15%</div></div>
<svg style="left:2220px;top:133px" width="14" height="12"><path d="M1 10.5 L7 3.5 L13 10.5" stroke="#606060" stroke-width="3" fill="none"/></svg>
<svg style="left:2220px;top:1322px" width="14" height="12"><path d="M1 1.5 L7 8.5 L13 1.5" stroke="#606060" stroke-width="3" fill="none"/></svg>
<!-- particle dots -->
<div class="abs" style="left:2108px;top:372px;width:3px;height:3px;border-radius:50%;background:#aaa"></div>
<div class="abs" style="left:2176px;top:130px;width:3px;height:3px;border-radius:50%;background:#bbb"></div>
<div class="abs" style="left:1980px;top:1163px;width:3px;height:3px;border-radius:50%;background:#aaa"></div>
<div class="abs" style="left:2146px;top:1231px;width:3px;height:3px;border-radius:50%;background:#aaa"></div>
<div class="abs" style="left:350px;top:1006px;width:3px;height:3px;border-radius:50%;background:#999"></div>
<div class="abs" style="left:641px;top:1013px;width:3px;height:3px;border-radius:50%;background:#aaa"></div>
<div class="abs" style="left:36px;top:1236px;width:3px;height:3px;border-radius:50%;background:#bbb"></div>
<div class="abs" style="left:449px;top:1274px;width:3px;height:3px;border-radius:50%;background:#999"></div>
<div class="abs" style="left:344px;top:1248px;width:3px;height:3px;border-radius:50%;background:#999"></div><svg style="left:346px;top:1249px" width="106" height="28"><path d="M0 1 L104 26" stroke="#e6e6e6" stroke-width="0.8"/></svg>
<svg style="left:1977px;top:1296px" width="40" height="20"><path d="M0 17 L36 2" stroke="#dddddd" stroke-width="1"/></svg>
</div></div>
<div id="progress"></div>
</body></html>
